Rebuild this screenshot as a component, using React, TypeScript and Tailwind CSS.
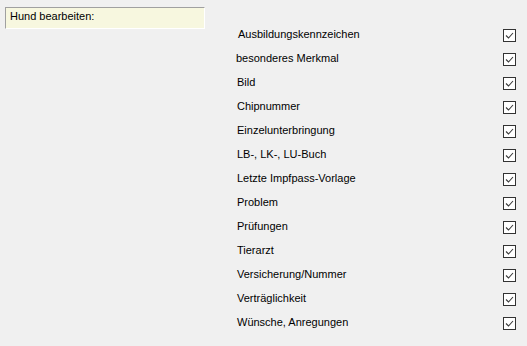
import React from "react";

const items = [
  { label: "Ausbildungskennzeichen", dx: 1 },
  { label: "besonderes Merkmal", dx: -1 },
  { label: "Bild", dx: 0 },
  { label: "Chipnummer", dx: 0 },
  { label: "Einzelunterbringung", dx: 0 },
  { label: "LB-, LK-, LU-Buch", dx: 0 },
  { label: "Letzte Impfpass-Vorlage", dx: 0 },
  { label: "Problem", dx: 0 },
  { label: "Prüfungen", dx: 0 },
  { label: "Tierarzt", dx: 0 },
  { label: "Versicherung/Nummer", dx: 0 },
  { label: "Verträglichkeit", dx: 0 },
  { label: "Wünsche, Anregungen", dx: 0 },
];

function Check() {
  return (
    <div className="w-[13px] h-[13px] border border-[#333333] bg-white flex items-center justify-center">
      <svg width="11" height="11" viewBox="0 0 11 11">
        <path d="M2 5.5 L4.5 8 L9 3" fill="none" stroke="#3a3a3a" strokeWidth="1.1" />
      </svg>
    </div>
  );
}

export default function App() {
  return (
    <div
      className="w-[527px] h-[346px] bg-[#f0f0f0] relative overflow-hidden text-[11px] text-black"
      style={{ fontFamily: '"Liberation Sans", Arial, sans-serif' }}
    >
      <div className="pt-[7px] pl-[5px]">
        <div className="w-[200px] h-[22px] bg-[#f7f7df] border-t border-l border-[#a0a0a0] border-r border-r-white border-b border-b-white pl-[4px] pt-[1px] leading-[14px]">
          Hund bearbeiten:
        </div>
      </div>
      <div className="mt-[-6px] pl-[236px] pr-[11px] flex flex-col">
        {items.map((it) => (
          <div key={it.label} className="h-[24px] flex items-center justify-between">
            <span className="leading-[14px] mt-[-3px]" style={{ marginLeft: it.dx + 1 }}>
              {it.label}
            </span>
            <Check />
          </div>
        ))}
      </div>
    </div>
  );
}
